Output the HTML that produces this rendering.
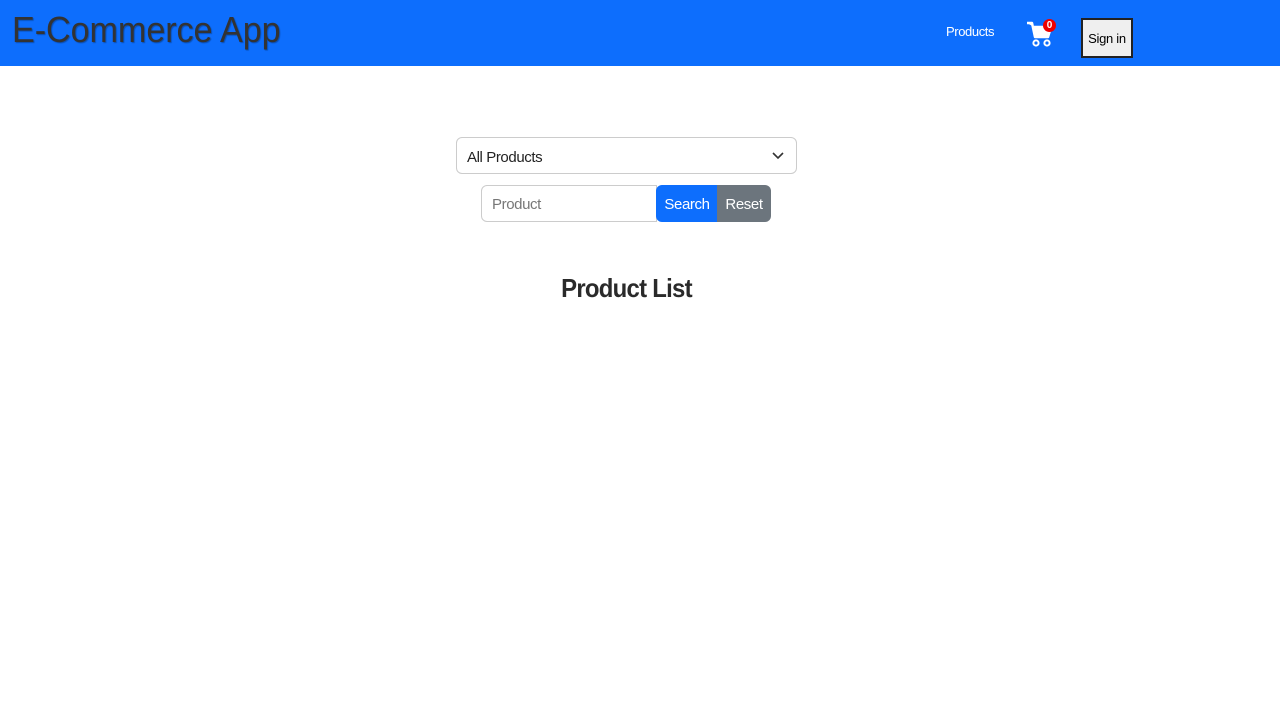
<!DOCTYPE html>
<html><head><style>
body{margin:0;font-family:"Liberation Sans",sans-serif;background:#fff;width:1280px;height:720px;position:relative;overflow:hidden}
.nav{position:absolute;left:0;top:0;width:1280px;height:66px;background:#0d6efd}
.logo{position:absolute;left:12px;top:9px;font-size:36px;color:#333;letter-spacing:-0.1px;transform:scaleX(0.95);transform-origin:left;text-shadow:1px 1px 1px rgba(0,0,0,.3)}
.prod{position:absolute;left:946px;top:24px;color:#fff;font-size:13px;letter-spacing:-0.4px}
.badge{position:absolute;left:1043px;top:19px;width:13px;height:13px;border-radius:50%;background:#e00;color:#fff;font-size:10px;font-weight:bold;text-align:center;line-height:13px}
.sign{position:absolute;left:1081px;top:18px;width:48px;height:36px;border:2px solid #222;background:#efefef;font-size:13px;line-height:38px;text-align:center;color:#000;letter-spacing:-0.3px}
.sel{position:absolute;left:456px;top:137px;width:341px;height:37px;border:1px solid #ccc;border-radius:6px;font-size:15px;line-height:39px;padding-left:10px;box-sizing:border-box;color:#222;letter-spacing:-0.4px}
.inp{position:absolute;left:481px;top:185px;width:176px;height:37px;border:1px solid #ccc;border-radius:6px 0 0 6px;box-sizing:border-box;font-size:15px;color:#777;line-height:38px;padding-left:10px;letter-spacing:-0.4px}
.btn{position:absolute;top:185px;height:37px;color:#fff;font-size:15px;line-height:39px;text-align:center;letter-spacing:-0.4px}
h2{position:absolute;left:0;width:1253px;top:273px;margin:0;text-align:center;font-size:26px;font-weight:bold;color:#2a2a2a;letter-spacing:-0.8px;transform:scaleX(0.92)}
</style></head><body>
<div class="nav">
<div class="logo">E-Commerce App</div>
<div class="prod">Products</div>
<svg style="position:absolute;left:1026px;top:21px" width="26" height="27" viewBox="0 0 26 27"><path d="M1 2h5l3 14h13l3-10H8" fill="#fff" stroke="#fff" stroke-width="2.5" stroke-linejoin="round"/><circle cx="10" cy="22" r="2.6" fill="none" stroke="#fff" stroke-width="2"/><circle cx="21" cy="22" r="2.6" fill="none" stroke="#fff" stroke-width="2"/></svg>
<div class="badge">0</div>
<div class="sign">Sign in</div>
</div>
<div class="sel">All Products<svg style="position:absolute;right:12px;top:14px" width="12" height="8"><path d="M1 1l5 5 5-5" fill="none" stroke="#333" stroke-width="1.6"/></svg></div>
<div class="inp">Product</div>
<div class="btn" style="left:656px;width:62px;background:#0d6efd;border-radius:6px 0 0 6px">Search</div>
<div class="btn" style="left:717px;width:54px;background:#6c757d;border-radius:0 6px 6px 0">Reset</div>
<h2>Product List</h2>
</body></html>
